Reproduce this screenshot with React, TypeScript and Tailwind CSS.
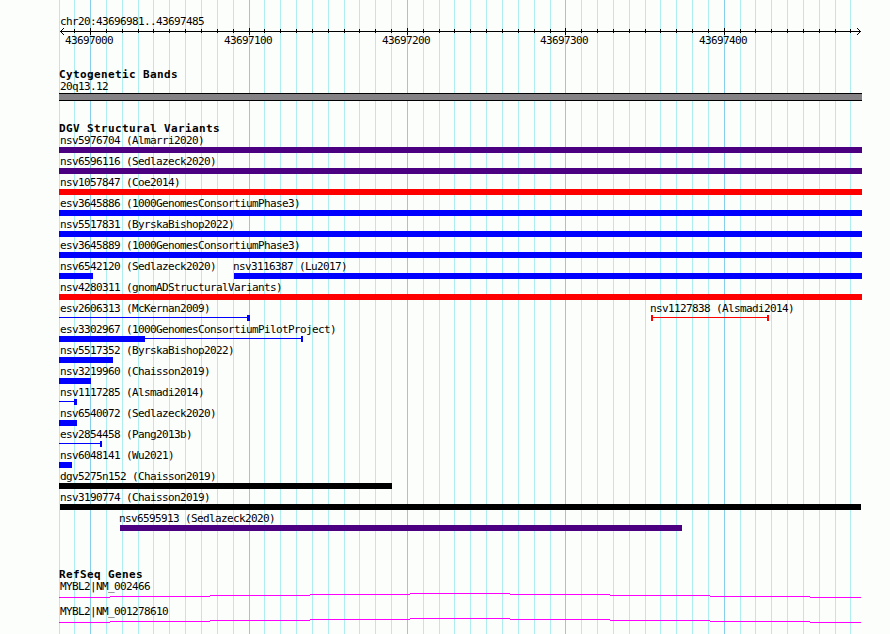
const LEFT = 59
const RIGHT = 862

const gridLines = [
    59, 74, 90, 106, 122, 138, 153, 169, 185, 201, 217, 233, 249, 264, 280, 296, 312, 328, 344, 359,
    375, 391, 407, 423, 439, 454, 470, 486, 502, 518, 534, 550, 565, 581, 597, 613, 629, 645, 660,
    676, 692, 708, 724, 740, 755, 771, 787, 803, 819, 835, 850,
]

const majors = [
    { x: 90, label: "43697000" },
    { x: 249, label: "43697100" },
    { x: 407, label: "43697200" },
    { x: 565, label: "43697300" },
    { x: 724, label: "43697400" },
]

const isMajor = (x: number) => majors.some((m) => m.x === x)

type Feature = {
    name: string
    start: number
    end: number
    color: string
    // where the solid part stops, the rest is a thin line
    solidEnd?: number
    startCap?: number
    endCap?: number
}

const indigo = "bg-[#4b0082]"
const red = "bg-[#ff0000]"
const blue = "bg-[#0000ff]"
const black = "bg-black"

const variants: Feature[][] = [
    [{ name: "nsv5976704 (Almarri2020)", start: LEFT, end: RIGHT, color: indigo }],
    [{ name: "nsv6596116 (Sedlazeck2020)", start: LEFT, end: RIGHT, color: indigo }],
    [{ name: "nsv1057847 (Coe2014)", start: LEFT, end: RIGHT, color: red }],
    [{ name: "esv3645886 (1000GenomesConsortiumPhase3)", start: LEFT, end: RIGHT, color: blue }],
    [{ name: "nsv5517831 (ByrskaBishop2022)", start: LEFT, end: RIGHT, color: blue }],
    [{ name: "esv3645889 (1000GenomesConsortiumPhase3)", start: LEFT, end: RIGHT, color: blue }],
    [
        { name: "nsv6542120 (Sedlazeck2020)", start: LEFT, end: 93, color: blue },
        { name: "nsv3116387 (Lu2017)", start: 234, end: RIGHT, color: blue },
    ],
    [{ name: "nsv4280311 (gnomADStructuralVariants)", start: LEFT, end: RIGHT, color: red }],
    [
        { name: "esv2606313 (McKernan2009)", start: LEFT, end: 250, color: blue, solidEnd: LEFT, endCap: 3 },
        { name: "nsv1127838 (Alsmadi2014)", start: 651, end: 769, color: red, solidEnd: 651, startCap: 2, endCap: 2 },
    ],
    [{ name: "esv3302967 (1000GenomesConsortiumPilotProject)", start: LEFT, end: 303, color: blue, solidEnd: 145, endCap: 2 }],
    [{ name: "nsv5517352 (ByrskaBishop2022)", start: LEFT, end: 113, color: blue }],
    [{ name: "nsv3219960 (Chaisson2019)", start: LEFT, end: 91, color: blue }],
    [{ name: "nsv1117285 (Alsmadi2014)", start: LEFT, end: 77, color: blue, solidEnd: LEFT, endCap: 3 }],
    [{ name: "nsv6540072 (Sedlazeck2020)", start: LEFT, end: 77, color: blue }],
    [{ name: "esv2854458 (Pang2013b)", start: LEFT, end: 102, color: blue, solidEnd: LEFT, endCap: 2 }],
    [{ name: "nsv6048141 (Wu2021)", start: LEFT, end: 72, color: blue }],
    [{ name: "dgv5275n152 (Chaisson2019)", start: LEFT, end: 392, color: black }],
    [{ name: "nsv3190774 (Chaisson2019)", start: 60, end: 861, color: black }],
    [{ name: "nsv6595913 (Sedlazeck2020)", start: 120, end: 682, color: indigo }],
]

const genes = ["MYBL2|NM_002466", "MYBL2|NM_001278610"]

function Grid() {
    return (
        <svg className="col-start-1 row-start-1" width={890} height={634} shapeRendering="crispEdges">
            {gridLines.map((x) => (
                <rect key={x} x={x} y={0} width={1} height={634} fill={isMajor(x) ? "#87ceeb" : "#afeeee"} />
            ))}
        </svg>
    )
}

function Ruler() {
    return (
        <div className="h-[69px] pt-4">
            <p className="ml-[60px] h-3">chr20:43696981..43697485</p>
            <svg className="block" width={890} height={7} shapeRendering="crispEdges">
                <rect x={60} y={3} width={801} height={1} />
                {gridLines.slice(1).map((x) => (
                    <rect key={x} x={x} y={isMajor(x) ? 0 : 1} width={1} height={isMajor(x) ? 7 : 4} />
                ))}
                <path d="M61 2h1v1h-1zM62 1h1v1h-1zM63 0h1v1h-1zM61 4h1v1h-1zM62 5h1v1h-1zM63 6h1v1h-1z" />
                <path d="M859 2h1v1h-1zM858 1h1v1h-1zM857 0h1v1h-1zM859 4h1v1h-1zM858 5h1v1h-1zM857 6h1v1h-1z" />
            </svg>
            <div className="flex h-3">
                {majors.map((m, i) => (
                    <span
                        key={m.x}
                        className="w-12 shrink-0"
                        style={{ marginLeft: i === 0 ? m.x - 25 : m.x - majors[i - 1].x - 48 }}
                    >
                        {m.label}
                    </span>
                ))}
            </div>
        </div>
    )
}

function Title({ children }: { children: string }) {
    return <h2 className="ml-[59px] h-[13px] text-[11px] leading-[13px] font-bold tracking-[0.378px]">{children}</h2>
}

function Variant({ feature, prev }: { feature: Feature; prev: number }) {
    const { name, start, end, color, solidEnd = end, startCap, endCap } = feature

    return (
        <div className="shrink-0" style={{ marginLeft: start - prev, width: end - start }}>
            <p className="h-3" style={{ marginLeft: Math.max(60, start - 1) - start }}>{name}</p>
            <div className="flex h-1.5">
                {startCap && <div className={color} style={{ width: startCap }} />}
                <div className={color} style={{ width: solidEnd - start }} />
                <div className="flex-1 pt-0.5">
                    <div className={`h-px ${color}`} />
                </div>
                {endCap && <div className={color} style={{ width: endCap }} />}
            </div>
        </div>
    )
}

function Gene({ name }: { name: string }) {
    return (
        <div className="h-[25px]">
            <p className="ml-[60px] h-3">{name}</p>
            <svg className="block" width={890} height={5} shapeRendering="crispEdges" fill="#ff00ff">
                <rect x={59} y={4} width={51} height={1} />
                <rect x={110} y={3} width={100} height={1} />
                <rect x={210} y={2} width={100} height={1} />
                <rect x={310} y={1} width={100} height={1} />
                <rect x={410} y={0} width={100} height={1} />
                <rect x={510} y={1} width={100} height={1} />
                <rect x={610} y={2} width={100} height={1} />
                <rect x={710} y={3} width={100} height={1} />
                <rect x={810} y={4} width={51} height={1} />
            </svg>
        </div>
    )
}

function App() {
    return (
        <div className="grid h-[634px] w-[890px] overflow-hidden bg-[#fcfefc] font-['DejaVu_Sans_Mono',monospace] text-[11px] leading-3 tracking-[-0.622px] whitespace-nowrap text-black">
            <Grid />

            <main className="z-10 col-start-1 row-start-1 flex flex-col">
                <Ruler />

                <section className="-mt-px h-[54px]">
                    <Title>Cytogenetic Bands</Title>
                    <p className="ml-[60px] h-3">20q13.12</p>
                    <div className="ml-[59px] h-2 w-[803px] border-y border-black bg-[#848284]" />
                </section>

                <section className="h-[446px]">
                    <Title>DGV Structural Variants</Title>
                    <div className="flex flex-col gap-[3px]">
                        {variants.map((row) => (
                            <div key={row[0].name} className="flex">
                                {row.map((f, i) => (
                                    <Variant key={f.name} feature={f} prev={i === 0 ? 0 : row[i - 1].end} />
                                ))}
                            </div>
                        ))}
                    </div>
                </section>

                <section>
                    <Title>RefSeq Genes</Title>
                    {genes.map((g) => (
                        <Gene key={g} name={g} />
                    ))}
                </section>
            </main>
        </div>
    )
}

export default App
